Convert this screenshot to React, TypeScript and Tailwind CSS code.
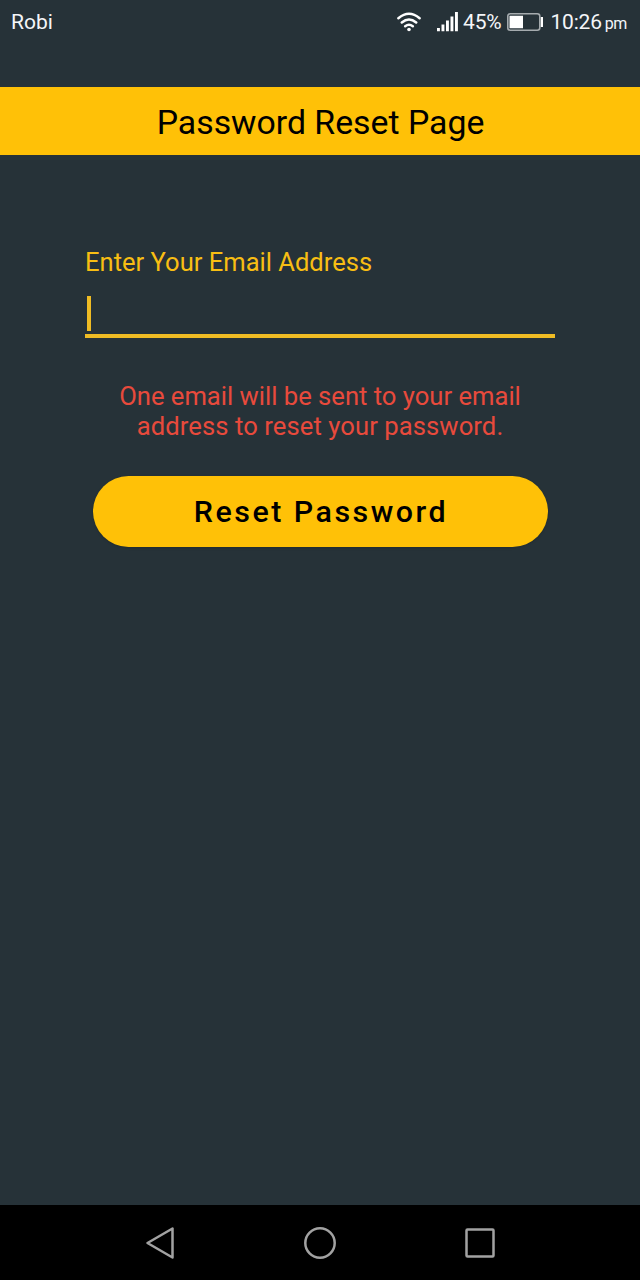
export default function App() {
  return (
    <div className="flex h-[1280px] w-[640px] flex-col overflow-hidden bg-[#263238] font-['Roboto',sans-serif]">
      <header className="flex h-[87px] items-start justify-between pt-[7px] pr-[13px] pl-[11px] text-[21px] leading-[30px] text-[#f4f6f8]">
        <span>Robi</span>
        <div className="flex h-[30px] items-center">
          <svg className="mr-[16px]" width="24" height="20" viewBox="0 0 24 20" fill="none" stroke="#fff" strokeWidth="2.500" strokeLinecap="round">
            <path d="M1.400 6.200Q12-2.800 22.600 6.200M4.800 10.500Q12 4.500 19.200 10.500M8.200 14.200Q12 11.200 15.800 14.200" />
            <circle cx="12" cy="17.500" r="1.800" fill="#fff" stroke="none" />
          </svg>
          <svg className="mr-[5px]" width="21" height="20" viewBox="0 0 21 20" fill="#fff">
            <path d="M0 16h2.900v3.300H0zM4.500 12.500h2.900v6.800H4.500zM9 8.500h2.900v10.800H9zM13.500 4.500h2.900v14.800h-2.900zM18 0h2.900v19.300H18z" />
          </svg>
          <span className="mr-[6px] tracking-[-0.200px]">45%</span>
          <svg className="mr-[7px]" width="36" height="18" viewBox="0 0 36 18" fill="none">
            <rect x="0.800" y="0.800" width="32" height="16.400" rx="2.500" stroke="#a5abae" strokeWidth="1.600" />
            <path d="M2.500 2.800H16v12.400H2.500zM33.800 4H36v10h-2.200z" fill="#fff" />
          </svg>
          <span className="flex items-baseline gap-[3px] pt-[2px] tracking-[-0.200px]">10:26<span className="text-[16px] tracking-[-0.400px]">pm</span></span>
        </div>
      </header>
      <h1 className="h-[67.500px] bg-[#ffc107] pl-[1px] text-center text-[33.800px] leading-[71px] text-black">Password Reset Page</h1>
      <main className="flex flex-1 flex-col items-center pt-[92.500px]">
        <label className="w-[470px] text-[25.550px] leading-[30px] text-[#f8be13]">Enter Your Email Address</label>
        <div className="mt-[19px] flex h-[42px] w-[470px] border-b-[4px] border-[#efbc24] pl-[2px]">
          <span className="h-[34.500px] w-[4px] bg-[#efbc24]" />
        </div>
        <p className="mt-[43px] text-center text-[25.600px] leading-[30px] text-[#e84a3c]">One email will be sent to your email<br /><span className="tracking-[0.080px]">address to reset your password.</span></p>
        <button className="mt-[34.500px] h-[71px] w-[455px] rounded-full bg-[#ffc107] pt-[2px] pl-[2px] text-[30.400px] font-medium tracking-[2.500px] text-black shadow">Reset Password</button>
      </main>
      <nav className="flex h-[75px] items-center justify-center bg-black">
        <svg width="360" height="36" viewBox="0 0 360 36" fill="none" stroke="#a2a2a2" strokeWidth="2.500" strokeLinejoin="round">
          <path d="M32.500 3.500v29L7.500 18z" />
          <circle cx="180" cy="18" r="14.700" />
          <rect x="326.500" y="4.500" width="27" height="27" rx="1" />
        </svg>
      </nav>
    </div>
  );
}
